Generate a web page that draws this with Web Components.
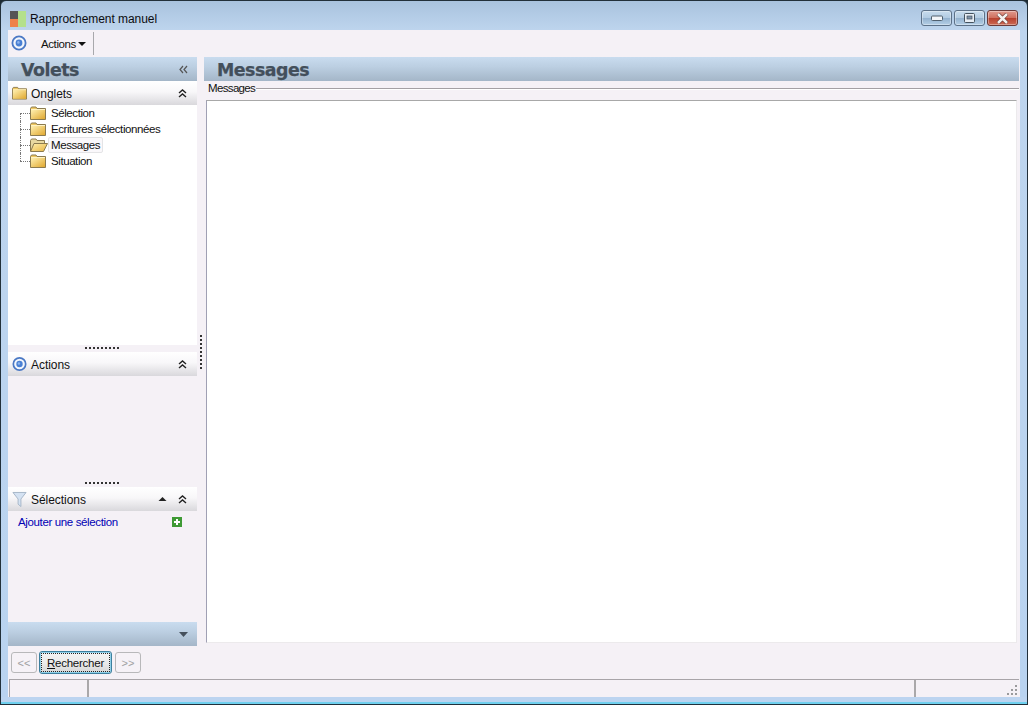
<!DOCTYPE html>
<html lang="fr">
<head>
<meta charset="utf-8">
<title>Rapprochement manuel</title>
<style>
  html, body { margin: 0; padding: 0; background: #1c2a33; }
  body { width: 1028px; height: 705px; overflow: hidden; font: 11.5px "Liberation Sans", sans-serif; color: #111; }
</style>
</head>
<body>
<app-window>
  <title-bar slot="title" caption="Rapprochement manuel"></title-bar>
  <tool-bar slot="tools"></tool-bar>
  <pane-left slot="left"></pane-left>
  <pane-right slot="right"></pane-right>
  <foot-buttons slot="buttons"></foot-buttons>
  <status-bar slot="status"></status-bar>
</app-window>

<script>
const ICONS = {
  target: `<svg width="16" height="16" viewBox="0 0 16 16"><circle cx="8" cy="8" r="6.6" fill="#f2f6fc" stroke="#4a78c4" stroke-width="1.8"/><circle cx="8" cy="8" r="3.4" fill="#4a80d4"/><circle cx="7.4" cy="7.4" r="1.3" fill="#8db4ec"/></svg>`,
  folder: `<svg width="16" height="14" viewBox="0 0 16 14"><defs><linearGradient id="fg" x1="0" y1="0" x2="1" y2="1"><stop offset="0" stop-color="#fff0b0"/><stop offset="1" stop-color="#e0a830"/></linearGradient></defs><path d="M.5 2.5 L1.5 1 H6 L7 2.5 H15.5 V13.5 H.5 Z" fill="#f0c860" stroke="#8a7a50"/><rect x="1" y="4" width="14" height="9" fill="url(#fg)"/><path d="M1 3.5 H15" stroke="#fff3c4"/></svg>`,
  open: `<svg width="18" height="14" viewBox="0 0 18 14"><defs><linearGradient id="og" x1="0" y1="0" x2="1" y2="1"><stop offset="0" stop-color="#fff0b0"/><stop offset="1" stop-color="#e8b440"/></linearGradient></defs><path d="M.5 13 V2.5 L1.5 1 H6 L7 2.5 H14.5 V5" fill="#e8d8a0" stroke="#8a7a50"/><path d="M.5 13.5 L4 5.5 H17.5 L13.5 13.5 Z" fill="url(#og)" stroke="#8a7a50"/></svg>`,
  funnel: `<svg width="16" height="17" viewBox="0 0 16 17"><path d="M1 1 H15 L9.5 8 V16 L6.5 13.5 V8 Z" fill="#d4e2f2" stroke="#a4b4c6"/></svg>`,
  plus: `<svg width="10" height="10" viewBox="0 0 10 10"><rect width="10" height="10" fill="#3f9a35"/><path d="M5 2 V8 M2 5 H8" stroke="#fff" stroke-width="2"/></svg>`,
  up2: `<svg width="9" height="9" viewBox="0 0 9 9"><path d="M1 4 L4.5 1 L8 4 M1 8 L4.5 5 L8 8" fill="none" stroke="#222" stroke-width="1.4"/></svg>`,
  up: `<svg width="9" height="6" viewBox="0 0 9 6"><path d="M.5 5 L4.5 1 L8.5 5 Z" fill="#222"/></svg>`,
  left2: `<svg width="9" height="9" viewBox="0 0 9 9"><path d="M4 1 L1 4.5 L4 8 M8 1 L5 4.5 L8 8" fill="none" stroke="#555" stroke-width="1.2"/></svg>`,
  down: `<svg width="9" height="5" viewBox="0 0 9 5"><path d="M0 0 H9 L4.5 5 Z" fill="#45505c"/></svg>`
};

// petit helper pour ne pas repeter attachShadow partout
class Base extends HTMLElement {
  connectedCallback() {
    if (!this.shadowRoot) {
      this.attachShadow({ mode: 'open' });
      this.shadowRoot.innerHTML = this.getTemplate();
    }
  }
}

class AppWindow extends Base {
  getTemplate() {
    return `
    <style>
      :host { display: block; width: 1028px; height: 705px; }
      .frame { box-sizing: border-box; width: 1028px; height: 705px; display: flex; flex-direction: column;
        border: 1px solid #22303a; border-radius: 6px 6px 0 0;
        background: linear-gradient(#a9c3de 0, #bed5ee 30px, #b9d3f0 100%); padding: 0 7px; }
      .inner { flex: 1; display: flex; flex-direction: column; background: #f5f1f6; min-height: 0; }
      .main { display: flex; height: 589px; margin-top: 1px; }
      .bottom-edge { height: 7px; margin: 0 -7px; border-bottom: 2px solid #6fd0ee; background: #bcd4f0; box-sizing: border-box; }
    </style>
    <div class="frame">
      <slot name="title"></slot>
      <div class="inner">
        <slot name="tools"></slot>
        <div class="main">
          <slot name="left"></slot>
          <split-bar></split-bar>
          <slot name="right"></slot>
        </div>
        <slot name="buttons"></slot>
        <slot name="status"></slot>
      </div>
      <div class="bottom-edge"></div>
    </div>`;
  }
}

class TitleBar extends Base {
  getTemplate() {
    return `
    <style>
      :host { display: flex; height: 29px; align-items: center; padding: 0 2px; }
      .logo { width: 16px; height: 16px; display: grid; grid-template-columns: 8px 8px; grid-template-rows: 8px 8px; margin: 7px 4px 0 0; }
      .logo i:nth-child(1) { background: #555; }
      .logo i:nth-child(2) { background: #b4e08c; grid-row: 1 / 3; grid-column: 2; }
      .logo i:nth-child(3) { background: #ee8148; }
      .cap { flex: 1; padding-top: 6px; font-size: 12px; color: #0c0c10; letter-spacing: -.05px; }
      .btns { display: flex; gap: 2px; margin: 5px 0 0 0; }
    </style>
    <div class="logo"><i></i><i></i><i></i></div>
    <span class="cap">${this.getAttribute('caption')}</span>
    <div class="btns">
      <win-btn kind="min"></win-btn>
      <win-btn kind="max"></win-btn>
      <win-btn kind="close"></win-btn>
    </div>`;
  }
}

class WinBtn extends Base {
  getTemplate() {
    const kind = this.getAttribute('kind');
    const glyph = {
      min: `<svg width="12" height="6" viewBox="0 0 12 6"><rect x=".5" y="1" width="11" height="4.5" rx="1" fill="#f2f5f8" stroke="#50606e"/></svg>`,
      max: `<svg width="11" height="10" viewBox="0 0 11 10"><rect x=".5" y=".5" width="10" height="9" rx="1" fill="#e6edf4" stroke="#45525e"/><rect x="3" y="3" width="5" height="3" fill="#7e93a8" stroke="#45525e" stroke-width=".7"/></svg>`,
      close: `<svg width="15" height="11" viewBox="0 0 15 11"><path d="M3 1 L12 10 M12 1 L3 10" stroke="#5a2a26" stroke-width="3.8"/><path d="M3 1 L12 10 M12 1 L3 10" stroke="#f4f0ee" stroke-width="2.6"/></svg>`
    }[kind];
    const bg = kind === 'close'
      ? 'linear-gradient(#e09a8e 0, #d0705f 48%, #b8412f 52%, #cc6a54 100%)'
      : 'linear-gradient(#c8dced 0, #b2cbe2 48%, #94b2cf 52%, #b4cfe6 100%)';
    return `
    <style>
      :host { display: flex; box-sizing: border-box; width: 31px; height: 16px; align-items: center; justify-content: center;
        border: 1px solid ${kind === 'close' ? '#6b3a38' : '#5c7188'}; border-radius: 3px; background: ${bg};
        box-shadow: inset 0 0 0 1px rgba(255,255,255,.35); }
      svg { display: block; }
    </style>${glyph}`;
  }
}

class ToolBar extends Base {
  getTemplate() {
    return `
    <style>
      :host { display: flex; height: 26px; align-items: center; background: #f5f1f6; padding-left: 3px; }
      .ico { width: 16px; height: 16px; margin-right: 14px; }
      .lbl { font-size: 11.5px; letter-spacing: -.4px; margin-top: 1px; }
      .car { width: 0; height: 0; border: 4px solid transparent; border-top: 4px solid #111; border-bottom: 0; margin: 1px 0 0 2px; }
      .sep { width: 1px; height: 23px; background: #a8a8ac; margin-left: 7px; }
    </style>
    <div class="ico">${ICONS.target}</div>
    <span class="lbl">Actions</span><i class="car"></i><i class="sep"></i>`;
  }
}

class BlueHeader extends Base {
  getTemplate() {
    return `
    <style>
      :host { display: flex; box-sizing: border-box; height: 24px; align-items: center; flex: none;
        background: linear-gradient(#c9dcef 0, #bccfe2 40%, #a4b6c8 100%);
        font: bold 17.4px "DejaVu Sans", sans-serif; letter-spacing: -.5px; color: #434f5b; -webkit-text-stroke: .25px #434f5b;
        padding: 2px 9px 0 13px; }
      .t { flex: 1; }
      svg { display: block; }
      ::slotted([slot="end"]) { margin-top: -2px; }
    </style>
    <span class="t"><slot></slot></span><slot name="end"></slot>`;
  }
}

class SectionHead extends Base {
  getTemplate() {
    const extra = this.hasAttribute('collapse') ? `<span class="x" style="margin-right:11px">${ICONS.up}</span>` : '';
    return `
    <style>
      :host { display: flex; height: 24px; align-items: center; flex: none; padding: 0 10px 0 4px;
        background: linear-gradient(#fff 0, #f8f7f9 45%, #d9d8dc 100%); font-size: 12px; }
      .ico { width: 15px; height: 15px; margin-right: 4px; display: flex; align-items: center; justify-content: center; }
      .t { flex: 1; letter-spacing: -.05px; padding-top: 1px; }
      .x { display: flex; }
      svg { display: block; }
    </style>
    <span class="ico">${ICONS[this.getAttribute('icon')]}</span>
    <span class="t"><slot></slot></span>${extra}<span class="x">${ICONS.up2}</span>`;
  }
}

class TreeItem extends Base {
  getTemplate() {
    const sel = this.hasAttribute('selected');
    const last = this.hasAttribute('last');
    const first = this.hasAttribute('first');
    return `
    <style>
      :host { display: flex; height: 16px; align-items: center; letter-spacing: -.42px; }
      .cn { width: 10px; height: 16px; margin-left: 12px; box-sizing: border-box; position: relative; flex: none; }
      .cn::before { content: ""; position: absolute; left: 0; top: ${first ? 8 : 0}px; height: ${last || first ? 8 : 16}px; border-left: 1px dotted #777; }
      .cn::after { content: ""; position: absolute; left: 0; top: 8px; width: 10px; border-top: 1px dotted #777; }
      .ic { width: 18px; height: 14px; flex: none; }
      .lb { box-sizing: border-box; height: 16px; line-height: 14px; padding: 0 2px; border: 1px solid transparent; border-radius: 2px; }
      .sel { border-color: #e4e4e6; background: #faf8fb; }
      svg { display: block; }
    </style>
    <span class="cn"></span>
    <span class="ic">${sel ? ICONS.open : ICONS.folder}</span>
    <span class="lb ${sel ? 'sel' : ''}"><slot></slot></span>`;
  }
}

class GripDots extends Base {
  getTemplate() {
    return `
    <style>
      :host { display: flex; box-sizing: border-box; height: 7px; padding-top: 2px; justify-content: center; flex: none; }
      i { width: 35px; height: 2px; background: repeating-linear-gradient(90deg, #333 0 2px, transparent 2px 4px); }
    </style><i></i>`;
  }
}

class PaneLeft extends Base {
  getTemplate() {
    return `
    <style>
      :host { display: flex; flex-direction: column; width: 189px; flex: none; height: 589px; }
      .tree { height: 240px; background: #fff; flex: none; }
      .acts { height: 104px; flex: none; }
      .sel { flex: 1; min-height: 0; }
      .add { display: flex; align-items: center; height: 20px; margin-top: 1px; padding: 0 15px 0 10px; justify-content: space-between; color: #0000b4; letter-spacing: -.36px; }
      svg { display: block; }
    </style>
    <blue-header>Volets<span slot="end">${ICONS.left2}</span></blue-header>
    <section-head icon="folder">Onglets</section-head>
    <div class="tree">
      <tree-item first>Sélection</tree-item>
      <tree-item>Ecritures sélectionnées</tree-item>
      <tree-item selected>Messages</tree-item>
      <tree-item last>Situation</tree-item>
    </div>
    <grip-dots></grip-dots>
    <section-head icon="target">Actions</section-head>
    <div class="acts"></div>
    <grip-dots></grip-dots>
    <section-head icon="funnel" collapse>Sélections</section-head>
    <div class="sel">
      <div class="add"><span>Ajouter une sélection</span>${ICONS.plus}</div>
    </div>
    <blue-header><span slot="end">${ICONS.down}</span></blue-header>`;
  }
}

class SplitBar extends Base {
  getTemplate() {
    return `
    <style>
      :host { display: flex; width: 7px; flex: none; align-items: center; justify-content: center; }
      i { width: 2px; height: 34px; background: repeating-linear-gradient(180deg, #333 0 2px, transparent 2px 4px); }
    </style><i></i>`;
  }
}

class PaneRight extends Base {
  getTemplate() {
    return `
    <style>
      :host { display: flex; flex-direction: column; flex: 1; min-width: 0; height: 589px; }
      blue-header { margin-right: 1px; }
      .leg { display: flex; align-items: center; height: 14px; padding-left: 4px; letter-spacing: -.65px; flex: none; margin-right: 1px; line-height: 12px; }
      .leg b { flex: 1; height: 1px; margin-left: 1px; background: #a4a0a4; box-shadow: 0 1px 0 #fff; }
      .box { flex: 1; margin: 5px 3px 3px 2px; background: #fff; box-sizing: border-box;
        border: 1px solid #eceaec; border-left-color: #a0a0b4; border-top-color: #a8a8a8; }
    </style>
    <blue-header>Messages</blue-header>
    <div class="leg"><span>Messages</span><b></b></div>
    <div class="box"></div>`;
  }
}

class NavButton extends Base {
  getTemplate() {
    const main = this.hasAttribute('main');
    return `
    <style>
      :host { display: inline-flex; box-sizing: border-box; align-items: center; justify-content: center; border-radius: 3px;
        height: ${main ? 23 : 21}px; width: ${main ? 73 : 26}px;
        border: 1px solid ${main ? '#3d7f9e' : '#b8b8ba'};
        background: ${main ? 'linear-gradient(#f4f4f4, #ebebeb 50%, #d6d6d6)' : '#f6f2f7'};
        ${main ? 'box-shadow: inset 0 0 0 1px #8fd0e8; letter-spacing: -.25px;' : 'font-size: 11px;'}
        color: ${main ? '#111' : '#a0a0a2'}; }
      .in { display: flex; align-items: center; justify-content: center; ${main ? 'width: 67px; height: 17px; outline: 1px dotted #222;' : ''} }
    </style>
    <span class="in"><slot></slot></span>`;
  }
}

class FootButtons extends Base {
  getTemplate() {
    return `
    <style>
      :host { display: flex; align-items: center; height: 33px; padding-left: 3px; gap: 2px; flex: none; }
      nav-button:last-child { margin-left: 1px; }
      u { text-underline-offset: 1px; }
    </style>
    <nav-button>&lt;&lt;</nav-button>
    <nav-button main><span><u>R</u>echercher</span></nav-button>
    <nav-button>&gt;&gt;</nav-button>`;
  }
}

class StatusBar extends Base {
  getTemplate() {
    return `
    <style>
      :host { display: flex; height: 18px; flex: none; box-sizing: border-box; margin: 0 1px; border-top: 1px solid #a8a4a8; border-left: 1px solid #a8a4a8; }
      .c { box-sizing: border-box; border-right: 2px solid #aaa8aa; }
      .c1 { width: 79px; } .c2 { width: 827px; }
      .c3 { flex: 1; display: flex; justify-content: flex-end; align-items: flex-end; padding: 0 1px 1px 0; }
      svg { display: block; }
    </style>
    <div class="c c1"></div><div class="c c2"></div>
    <div class="c3"><svg width="11" height="11" viewBox="0 0 11 11" fill="#9a9a9c"><rect x="8" y="0" width="2" height="2"/><rect x="4" y="4" width="2" height="2"/><rect x="8" y="4" width="2" height="2"/><rect x="0" y="8" width="2" height="2"/><rect x="4" y="8" width="2" height="2"/><rect x="8" y="8" width="2" height="2"/></svg></div>`;
  }
}

customElements.define('app-window', AppWindow);
customElements.define('title-bar', TitleBar);
customElements.define('win-btn', WinBtn);
customElements.define('tool-bar', ToolBar);
customElements.define('blue-header', BlueHeader);
customElements.define('section-head', SectionHead);
customElements.define('tree-item', TreeItem);
customElements.define('grip-dots', GripDots);
customElements.define('pane-left', PaneLeft);
customElements.define('split-bar', SplitBar);
customElements.define('pane-right', PaneRight);
customElements.define('nav-button', NavButton);
customElements.define('foot-buttons', FootButtons);
customElements.define('status-bar', StatusBar);
</script>
</body>
</html>
